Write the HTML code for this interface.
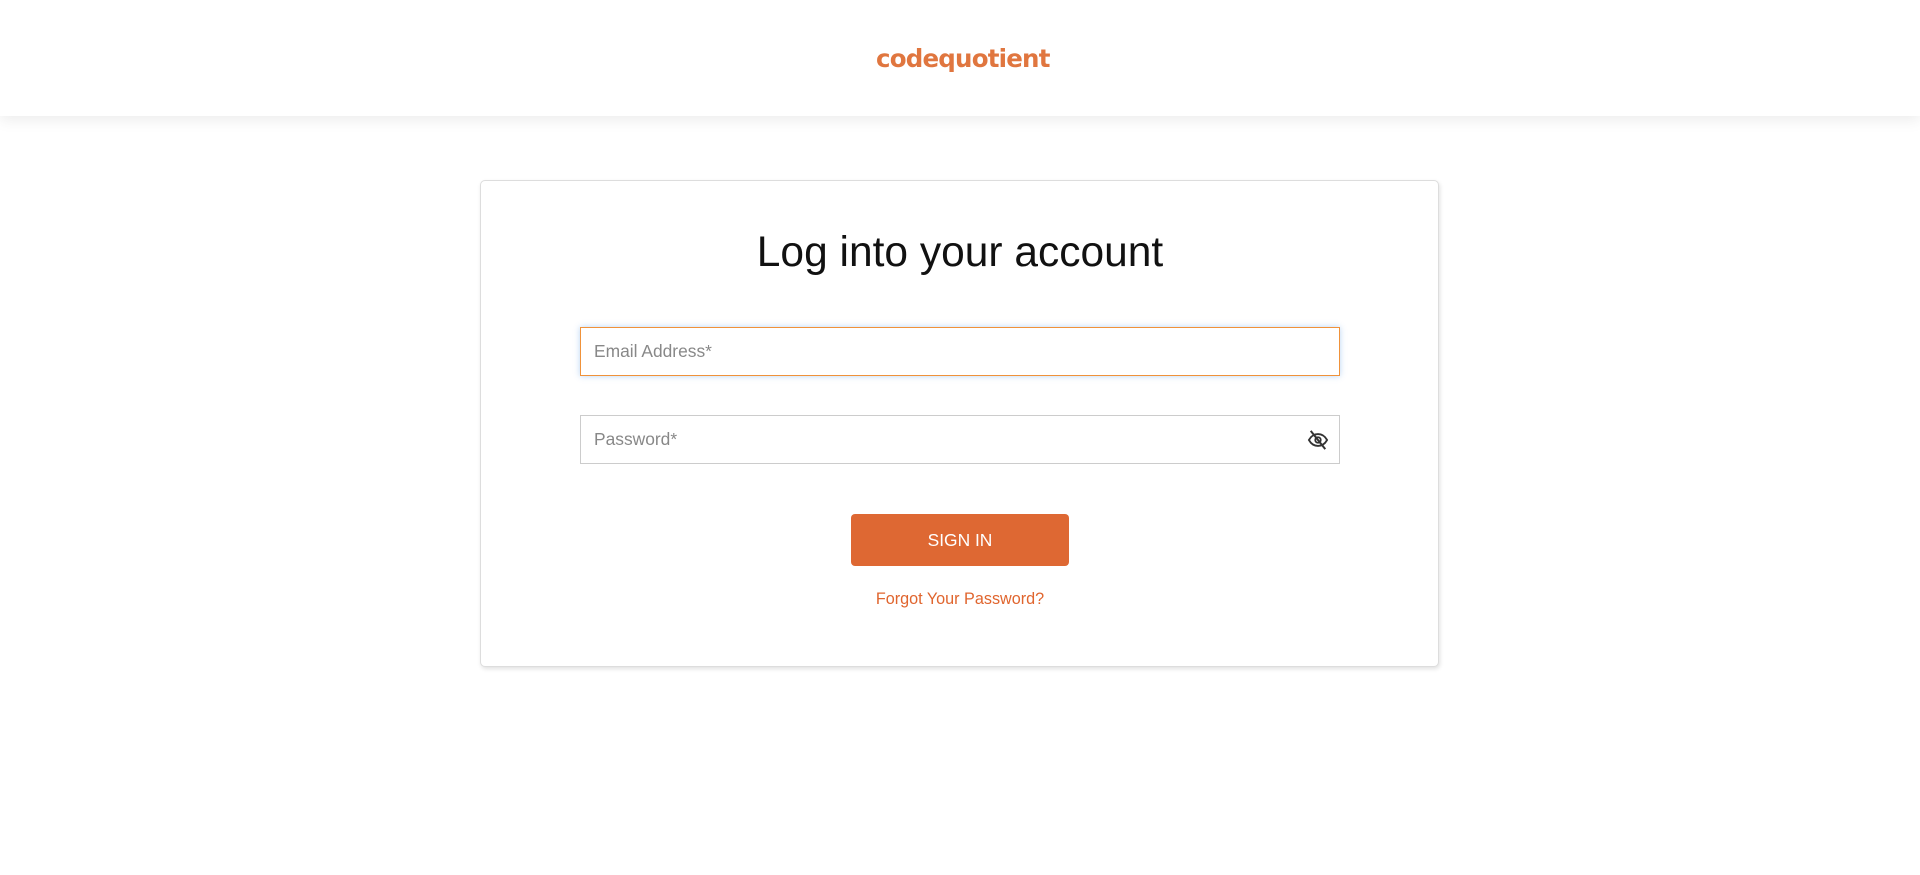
<!DOCTYPE html>
<html><head><meta charset="utf-8"><style>
*{box-sizing:border-box;margin:0;padding:0}
body{width:1920px;height:875px;background:#fff;font-family:"Liberation Sans",Arial,sans-serif;overflow:hidden;position:relative}
.hdr{position:absolute;left:0;top:0;width:1920px;height:116px;background:#fff;box-shadow:0 4px 14px rgba(0,0,0,0.08)}
.logo{position:absolute;left:876px;top:44px;font-family:"DejaVu Sans",sans-serif;font-weight:bold;font-size:24.5px;color:#e0763f;letter-spacing:-0.8px}
.card{position:absolute;left:480px;top:180px;width:959px;height:487px;border:1px solid #ddd;border-radius:5px;box-shadow:1px 2px 4px rgba(0,0,0,0.12);background:#fff}
h1{position:absolute;left:0;width:100%;top:229px;text-align:center;font-weight:normal;font-size:42.5px;color:#111}
.inp{position:absolute;left:580px;width:760px;height:49px;border:1px solid #ccc;font-size:17.4px;color:#888;padding-left:13px;line-height:47px}
.e{top:327px;border-color:#f0923a;box-shadow:0 0 6px rgba(100,160,230,0.45)}
.p{top:415px}
.btn{position:absolute;left:851px;top:514px;width:218px;height:52px;background:#de6833;border-radius:4px;color:#fff;font-size:17.4px;text-align:center;line-height:52px}
.fg{position:absolute;left:0;width:100%;top:590px;text-align:center;color:#e0652e;font-size:16.2px}
</style></head><body>
<div class="hdr"><div class="logo">codequotient</div></div>
<div class="card"></div>
<h1>Log into your account</h1>
<div class="inp e">Email Address*</div>
<div class="inp p">Password*
<svg style="position:absolute;right:10px;top:14px" width="22" height="20" viewBox="0 0 24 22"><path d="M2 11c2.5-4.5 6-6.5 10-6.5s7.5 2 10 6.5c-2.5 4.5-6 6.5-10 6.5S4.5 15.5 2 11z" fill="none" stroke="#333" stroke-width="2"/><circle cx="12" cy="11" r="3" fill="none" stroke="#333" stroke-width="2"/><path d="M4 1l16 20" stroke="#333" stroke-width="2.2"/></svg></div>
<div class="btn">SIGN IN</div>
<div class="fg">Forgot Your Password?</div>
</body></html>
